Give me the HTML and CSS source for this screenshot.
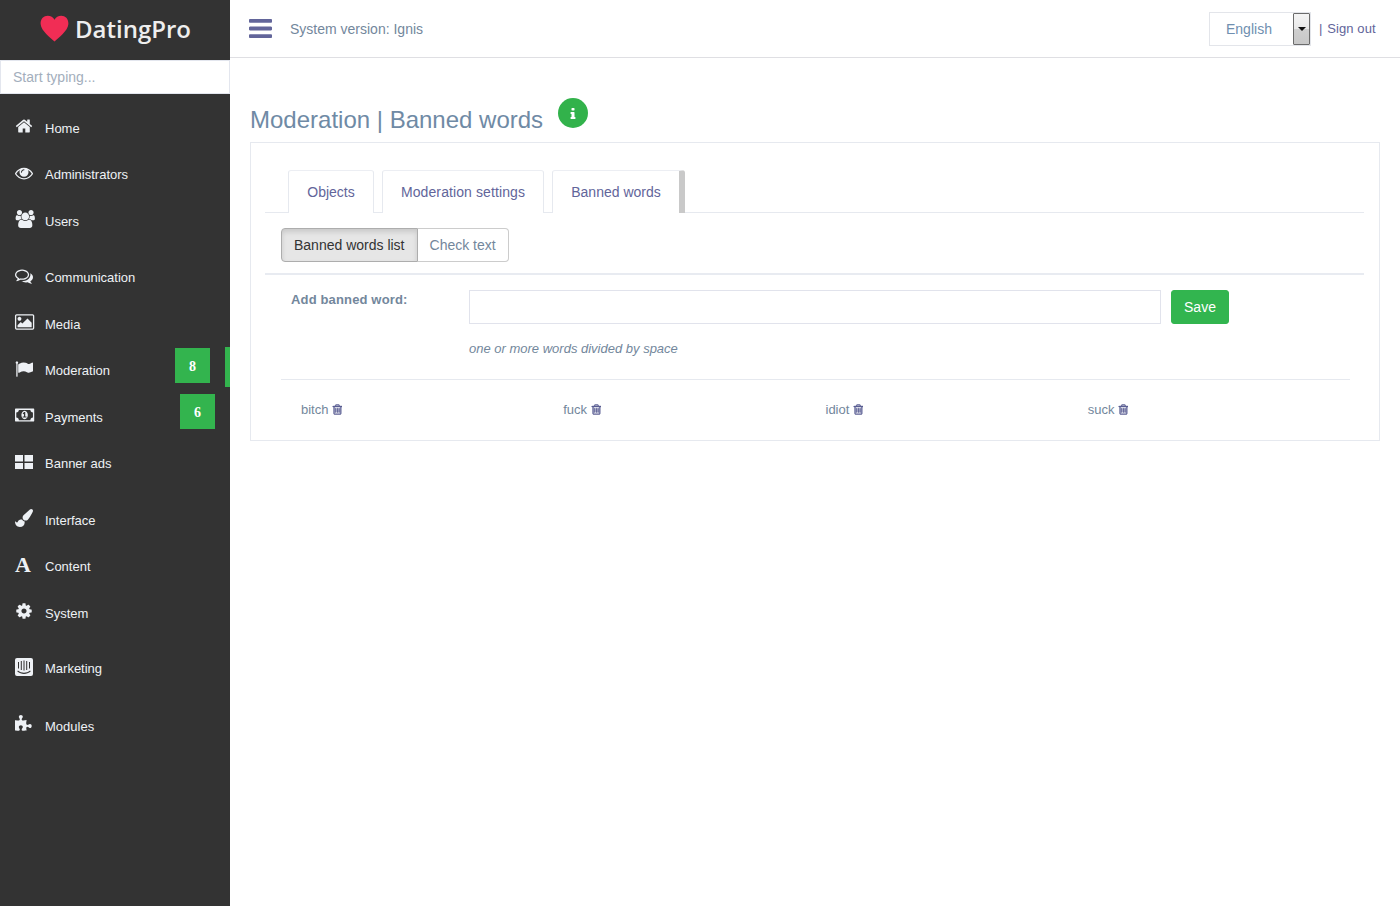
FILE: index.html
```html
<!DOCTYPE html>
<html lang="en">
<head>
<meta charset="utf-8">
<title>Moderation | Banned words</title>
<link rel="stylesheet" href="styles.css">
</head>
<body>
<aside class="sidebar">
  <div class="logo">
    <svg class="heart" viewBox="0 0 30 28"><path d="M15 27.500C11 23.500 1 16.500.6 9.300.3 3.800 4 .8 8 .8c3 0 5.600 1.500 7 4 1.400-2.500 4-4 7-4 4 0 7.700 3 7.400 8.500C29 16.500 19 23.500 15 27.500z"/></svg>
    <span class="logo-text">DatingPro</span>
  </div>
  <input class="search" type="text" placeholder="Start typing...">
  <nav class="menu">
    <a class="item" href="#"><svg class="ico" viewBox="0 0 1792 1792"><path d="M1472 992v480q0 26-19 45t-45 19h-384v-384h-256v384h-384q-26 0-45-19t-19-45v-480q0-1 .5-3t.5-3l575-474 575 474q1 2 1 6zm223-69l-62 74q-8 9-21 11h-3q-13 0-21-7l-692-577-692 577q-12 8-24 7-13-2-21-11l-62-74q-8-10-7-23.500t11-21.500l719-599q32-26 76-26t76 26l244 204v-195q0-14 9-23t23-9h192q14 0 23 9t9 23v408l219 182q10 8 11 21.500t-7 23.500z"/></svg><span>Home</span></a>
    <a class="item" href="#"><svg class="ico" viewBox="0 0 1792 1792"><path d="M1664 960q-152-236-381-353 61 104 61 225 0 185-131.500 316.500t-316.500 131.500-316.500-131.500-131.500-316.500q0-121 61-225-229 117-381 353 133 205 333.500 326.500t434.500 121.500 434.500-121.500 333.500-326.500zm-720-384q0-20-14-34t-34-14q-125 0-214.500 89.500t-89.500 214.500q0 20 14 34t34 14 34-14 14-34q0-86 61-147t147-61q20 0 34-14t14-34zm848 384q0 34-20 69-140 230-376.500 368.500t-499.500 138.500-499.500-139-376.500-368q-20-35-20-69t20-69q140-229 376.500-368t499.500-139 499.500 139 376.500 368q20 35 20 69z"/></svg><span>Administrators</span></a>
    <a class="item" href="#"><svg class="ico ico-w20" viewBox="0 0 1920 1792"><path d="M593 896q-162 5-265 128h-134q-82 0-138-40.500t-56-118.500q0-353 124-353 6 0 43.500 21t97.500 42.500 119 21.500q67 0 133-23-5 37-5 66 0 139 81 256zm1071 637q0 120-73 189.500t-194 69.500h-874q-121 0-194-69.500t-73-189.500q0-53 3.500-103.500t14-109 26.500-108.500 43-97.500 62-81 85.500-53.500 111.500-20q10 0 43 21.500t73 48 107 48 135 21.500 135-21.500 107-48 73-48 43-21.500q61 0 111.500 20t85.500 53.500 62 81 43 97.500 26.500 108.500 14 109 3.500 103.500zm-1024-1277q0 106-75 181t-181 75-181-75-75-181 75-181 181-75 181 75 75 181zm704 384q0 159-112.500 271.500t-271.500 112.500-271.500-112.500-112.500-271.500 112.500-271.500 271.500-112.500 271.500 112.500 112.500 271.500zm576 225q0 78-56 118.500t-138 40.500h-134q-103-123-265-128 81-117 81-256 0-29-5-66 66 23 133 23 59 0 119-21.500t97.500-42.500 43.500-21q124 0 124 353zm-128-609q0 106-75 181t-181 75-181-75-75-181 75-181 181-75 181 75 75 181z"/></svg><span>Users</span></a>
    <a class="item group" href="#"><svg class="ico" viewBox="0 0 1792 1792"><path d="M704 384q-153 0-286 52t-211.500 141-78.500 191q0 82 53 158t149 132l97 56-35 84q34-20 62-39l44-31 53 10q78 14 153 14 153 0 286-52t211.500-141 78.500-191-78.500-191-211.500-141-286-52zm0-128q191 0 353.500 68.500t256.500 186.500 94 257-94 257-256.500 186.500-353.500 68.500q-86 0-176-16-124 88-278 128-36 9-86 16h-3q-11 0-20.500-8t-11.500-21q-1-3-1-6.500t.5-6.500 2-6l2.500-5 3.500-5.500 4-5 4.500-5 4-4.500q5-6 23-25t26-29.500 22.500-29 25-38.500 20.500-44q-124-72-195-177t-71-224q0-139 94-257t256.500-186.500 353.500-68.500zm822 1169q10 24 20.500 44t25 38.500 22.500 29 26 29.500 23 25q1 1 4 4.500t4.500 5 4 5 3.500 5.500l2.500 5 2 6 .5 6.500-1 6.500q-3 14-13 22t-22 7q-50-7-86-16-154-40-278-128-90 16-176 16-271 0-472-132 58 4 88 4 161 0 309-45t264-129q125-92 192-212t67-254q0-77-23-152 129 71 204 178t75 230q0 120-71 224.500t-195 176.500z"/></svg><span>Communication</span></a>
    <a class="item" href="#"><svg class="ico ico-w20" viewBox="0 0 1920 1792"><path d="M576 576q0 80-56 136t-136 56-136-56-56-136 56-136 136-56 136 56 56 136zm1024 384v448h-1408v-192l320-320 160 160 512-512zm96-704h-1600q-13 0-22.500 9.500t-9.500 22.500v1216q0 13 9.500 22.500t22.500 9.500h1600q13 0 22.500-9.500t9.500-22.500v-1216q0-13-9.500-22.500t-22.500-9.500zm160 32v1216q0 66-47 113t-113 47h-1600q-66 0-113-47t-47-113v-1216q0-66 47-113t113-47h1600q66 0 113 47t47 113z"/></svg><span>Media</span></a>
    <a class="item" href="#"><svg class="ico" viewBox="0 0 1792 1792"><path d="M320 256q0 72-64 110v1266q0 13-9.500 22.500t-22.500 9.500h-64q-13 0-22.500-9.500t-9.500-22.500v-1266q-64-38-64-110 0-53 37.500-90.500t90.500-37.500 90.500 37.500 37.500 90.500zm1472 64v763q0 25-12.500 38.500t-39.500 27.500q-215 116-369 116-61 0-123.500-22t-108.500-48-115.500-48-142.500-22q-192 0-464 146-17 9-33 9-26 0-45-19t-19-45v-742q0-32 31-55 21-14 79-43 236-120 421-120 107 0 200 29t219 88q38 19 88 19 54 0 117.500-21t110-47 88-47 54.500-21q26 0 45 19t19 45z"/></svg><span>Moderation</span><b class="badge badge-mod">8</b><i class="sliver"></i></a>
    <a class="item" href="#"><svg class="ico ico-w20" viewBox="0 0 2048 1792"><path d="M768 1152h384v-96h-128v-448h-114l-148 137 77 80q42-37 55-57h2v288h-128v96zm512-256q0 70-21 142t-59.500 134-101.500 101-138 39-138-39-101.500-101-59.500-134-21-142 21-142 59.500-134 101.500-101 138-39 138 39 101.500 101 59.500 134 21 142zm512 256v-512q-106 0-181-75t-75-181h-1152q0 106-75 181t-181 75v512q106 0 181 75t75 181h1152q0-106 75-181t181-75zm128-832v1152q0 26-19 45t-45 19h-1792q-26 0-45-19t-19-45v-1152q0-26 19-45t45-19h1792q26 0 45 19t19 45z"/></svg><span>Payments</span><b class="badge badge-pay">6</b></a>
    <a class="item" href="#"><svg class="ico" viewBox="0 0 18 18"><path d="M0 2h8v6.500H0zM9.500 2H18v6.500H9.500zM0 10h8v6H0zM9.500 10H18v6H9.500z"/></svg><span>Banner ads</span></a>
    <a class="item group" href="#"><svg class="ico" viewBox="0 0 1792 1792"><path d="M1615 0q70 0 122.500 46.500t52.500 116.500q0 63-45 151-332 629-465 752-97 91-218 91-126 0-216.500-92.500t-90.500-219.500q0-128 92-212l638-579q59-54 130-54zm-909 1034q39 76 106.500 130t150.500 76l1 71q4 213-129.500 347t-348.500 134q-123 0-218-46.500t-152.500-127.500-86.500-183-29-220q7 5 41 30t62 44.500 59 36.500 46 17q41 0 55-37 25-66 57.500-112.500t69.500-76 88-47.500 103-25.500 125-10.500z"/></svg><span>Interface</span></a>
    <a class="item" href="#"><span class="ico ico-font">A</span><span>Content</span></a>
    <a class="item" href="#"><svg class="ico" viewBox="0 0 1792 1792"><path d="M1152 896q0-106-75-181t-181-75-181 75-75 181 75 181 181 75 181-75 75-181zm512-109v222q0 12-8 23t-20 13l-185 28q-19 54-39 91 35 50 107 138 10 12 10 25t-9 23q-27 37-99 108t-94 71q-12 0-26-9l-138-108q-44 23-91 38-16 136-29 186-7 28-36 28h-222q-14 0-24.500-8.500t-11.500-21.500l-28-184q-49-16-90-37l-141 107q-10 9-25 9-14 0-25-11-126-114-165-168-7-10-7-23 0-12 8-23 15-21 51-66.500t54-70.500q-27-50-41-99l-183-27q-13-2-21-12.500t-8-23.500v-222q0-12 8-23t19-13l186-28q14-46 39-92-40-57-107-138-10-12-10-24 0-10 9-23 26-36 98.500-107.500t94.500-71.500q13 0 26 10l138 107q44-23 91-38 16-136 29-186 7-28 36-28h222q14 0 24.500 8.500t11.500 21.500l28 184q49 16 90 37l142-107q9-9 24-9 13 0 25 10 129 119 165 170 7 8 7 22 0 12-8 23-15 21-51 66.500t-54 70.500q26 50 41 98l183 28q13 2 21 12.500t8 23.500z"/></svg><span>System</span></a>
    <a class="item marketing" href="#"><svg class="ico" viewBox="0 0 18 18"><path fill-rule="evenodd" d="M2 0h14a2 2 0 0 1 2 2v14a2 2 0 0 1-2 2H2a2 2 0 0 1-2-2V2a2 2 0 0 1 2-2zM3 4v6.500h1V4zm2.800-1v9h1V3zm2.700-.5v10h1v-10zm2.700.5v9h1V3zM14 4v6.500h1V4zM2.900 12.600l-.6.800c4 3.300 9.400 3.300 13.400 0l-.6-.8c-3.700 3-8.500 3-12.200 0z"/></svg><span>Marketing</span></a>
    <a class="item modules" href="#"><svg class="ico" viewBox="0 0 1792 1792"><path d="M1664 1098q0 81-44.500 135t-123.500 54q-41 0-77.500-17.500t-59-38-56.500-38-71-17.500q-110 0-110 124 0 39 16 115t15 115v5q-22 0-33 1-34 3-97.500 11.500t-115.500 13.500-98 5q-61 0-103-26.500t-42-83.500q0-37 17.500-71t38-56.500 38-59 17.500-77.500q0-79-54-123.500t-135-44.500q-84 0-143 45.500t-59 127.500q0 43 15 83t33.500 64.500 33.500 53 15 50.500q0 45-46 89-37 35-117 35-95 0-245-24-9-2-27.500-4t-27.500-4l-13-2q-1 0-3-1-2 0-2-1v-1024q2 1 17.500 3.500t34 5 21.500 3.500q150 24 245 24 80 0 117-35 46-44 46-89 0-22-15-50.500t-33.500-53-33.500-64.500-15-83q0-82 59-127.500t144-45.500q80 0 134 44.500t54 123.500q0 41-17.500 77.500t-38 59-38 56.500-17.500 71q0 57 42 83.500t103 26.500q64 0 180-15t163-17v2q-1 2-3.500 17.500t-5 34-3.500 21.500q-24 150-24 245 0 80 35 117 44 46 89 46 22 0 50.500-15t53-33.500 64.500-33.500 83-15q82 0 127.500 59t45.500 143z"/></svg><span>Modules</span></a>
  </nav>
</aside>
<div class="main">
  <header class="topbar">
    <svg class="burger" viewBox="128 256 1536 1280" preserveAspectRatio="none"><path d="M1664 1344v128q0 26-19 45t-45 19h-1408q-26 0-45-19t-19-45v-128q0-26 19-45t45-19h1408q26 0 45 19t19 45zm0-512v128q0 26-19 45t-45 19h-1408q-26 0-45-19t-19-45v-128q0-26 19-45t45-19h1408q26 0 45 19t19 45zm0-512v128q0 26-19 45t-45 19h-1408q-26 0-45-19t-19-45v-128q0-26 19-45t45-19h1408q26 0 45 19t19 45z"/></svg>
    <span class="version">System version: Ignis</span>
    <div class="lang">
      <span class="lang-value">English</span>
      <span class="lang-arrow"></span>
    </div>
    <a class="signout" href="#"><span class="sep">|</span> Sign out</a>
  </header>
  <main class="content">
    <div class="title-row">
      <h1>Moderation | Banned words</h1>
      <span class="info"><svg viewBox="512 128 768 1408"><path d="M1216 1344v128q0 26-19 45t-45 19h-512q-26 0-45-19t-19-45v-128q0-26 19-45t45-19h64v-384h-64q-26 0-45-19t-19-45v-128q0-26 19-45t45-19h384q26 0 45 19t19 45v576h64q26 0 45 19t19 45zm-128-1152v192q0 26-19 45t-45 19h-256q-26 0-45-19t-19-45v-192q0-26 19-45t45-19h256q26 0 45 19t19 45z"/></svg></span>
    </div>
    <section class="card">
      <ul class="tabs">
        <li class="tab tab-objects"><a href="#">Objects</a></li>
        <li class="tab tab-settings"><a href="#">Moderation settings</a></li>
        <li class="tab tab-active"><a href="#">Banned words</a></li>
      </ul>
      <div class="subnav">
        <a class="sub sub-active" href="#">Banned words list</a><a class="sub" href="#">Check text</a>
      </div>
      <div class="form-row">
        <label class="form-label" for="word">Add banned word:</label>
        <div class="form-field">
          <div class="form-line">
            <input class="word-input" id="word" type="text">
            <button class="save" type="button">Save</button>
          </div>
          <p class="hint">one or more words divided by space</p>
        </div>
      </div>
      <div class="words">
        <div class="word">bitch <svg class="trash" viewBox="128 64 1408 1664"><path d="M704 736v576q0 14-9 23t-23 9h-64q-14 0-23-9t-9-23v-576q0-14 9-23t23-9h64q14 0 23 9t9 23zm256 0v576q0 14-9 23t-23 9h-64q-14 0-23-9t-9-23v-576q0-14 9-23t23-9h64q14 0 23 9t9 23zm256 0v576q0 14-9 23t-23 9h-64q-14 0-23-9t-9-23v-576q0-14 9-23t23-9h64q14 0 23 9t9 23zm128 724v-948h-896v948q0 22 7 40.500t14.500 27 10.500 8.500h832q3 0 10.500-8.500t14.500-27 7-40.500zm-672-1076h448l-48-117q-7-9-17-11h-317q-10 2-17 11zm928 32v64q0 14-9 23t-23 9h-96v948q0 83-47 143.500t-113 60.500h-832q-66 0-113-58.500t-47-141.500v-952h-96q-14 0-23-9t-9-23v-64q0-14 9-23t23-9h309l70-167q15-37 54-63t79-26h320q40 0 79 26t54 63l70 167h309q14 0 23 9t9 23z"/></svg></div>
        <div class="word">fuck <svg class="trash" viewBox="128 64 1408 1664"><path d="M704 736v576q0 14-9 23t-23 9h-64q-14 0-23-9t-9-23v-576q0-14 9-23t23-9h64q14 0 23 9t9 23zm256 0v576q0 14-9 23t-23 9h-64q-14 0-23-9t-9-23v-576q0-14 9-23t23-9h64q14 0 23 9t9 23zm256 0v576q0 14-9 23t-23 9h-64q-14 0-23-9t-9-23v-576q0-14 9-23t23-9h64q14 0 23 9t9 23zm128 724v-948h-896v948q0 22 7 40.500t14.500 27 10.500 8.500h832q3 0 10.500-8.500t14.500-27 7-40.500zm-672-1076h448l-48-117q-7-9-17-11h-317q-10 2-17 11zm928 32v64q0 14-9 23t-23 9h-96v948q0 83-47 143.500t-113 60.500h-832q-66 0-113-58.500t-47-141.500v-952h-96q-14 0-23-9t-9-23v-64q0-14 9-23t23-9h309l70-167q15-37 54-63t79-26h320q40 0 79 26t54 63l70 167h309q14 0 23 9t9 23z"/></svg></div>
        <div class="word">idiot <svg class="trash" viewBox="128 64 1408 1664"><path d="M704 736v576q0 14-9 23t-23 9h-64q-14 0-23-9t-9-23v-576q0-14 9-23t23-9h64q14 0 23 9t9 23zm256 0v576q0 14-9 23t-23 9h-64q-14 0-23-9t-9-23v-576q0-14 9-23t23-9h64q14 0 23 9t9 23zm256 0v576q0 14-9 23t-23 9h-64q-14 0-23-9t-9-23v-576q0-14 9-23t23-9h64q14 0 23 9t9 23zm128 724v-948h-896v948q0 22 7 40.500t14.500 27 10.500 8.500h832q3 0 10.500-8.500t14.500-27 7-40.500zm-672-1076h448l-48-117q-7-9-17-11h-317q-10 2-17 11zm928 32v64q0 14-9 23t-23 9h-96v948q0 83-47 143.500t-113 60.500h-832q-66 0-113-58.500t-47-141.500v-952h-96q-14 0-23-9t-9-23v-64q0-14 9-23t23-9h309l70-167q15-37 54-63t79-26h320q40 0 79 26t54 63l70 167h309q14 0 23 9t9 23z"/></svg></div>
        <div class="word">suck <svg class="trash" viewBox="128 64 1408 1664"><path d="M704 736v576q0 14-9 23t-23 9h-64q-14 0-23-9t-9-23v-576q0-14 9-23t23-9h64q14 0 23 9t9 23zm256 0v576q0 14-9 23t-23 9h-64q-14 0-23-9t-9-23v-576q0-14 9-23t23-9h64q14 0 23 9t9 23zm256 0v576q0 14-9 23t-23 9h-64q-14 0-23-9t-9-23v-576q0-14 9-23t23-9h64q14 0 23 9t9 23zm128 724v-948h-896v948q0 22 7 40.500t14.500 27 10.500 8.500h832q3 0 10.500-8.500t14.500-27 7-40.500zm-672-1076h448l-48-117q-7-9-17-11h-317q-10 2-17 11zm928 32v64q0 14-9 23t-23 9h-96v948q0 83-47 143.500t-113 60.500h-832q-66 0-113-58.500t-47-141.500v-952h-96q-14 0-23-9t-9-23v-64q0-14 9-23t23-9h309l70-167q15-37 54-63t79-26h320q40 0 79 26t54 63l70 167h309q14 0 23 9t9 23z"/></svg></div>
      </div>
    </section>
  </main>
</div>
</body>
</html>
```
FILE: styles.css
```css
* { box-sizing: border-box; }
html, body { height: 100%; }
body {
  margin: 0;
  display: flex;
  overflow: hidden;
  background: #fff;
  font-family: "Liberation Sans", Arial, sans-serif;
  font-size: 14px;
  color: #73879c;
}
a { text-decoration: none; color: inherit; }

.sidebar { width: 230px; flex: none; background: #333; height: 906px; }
.logo { height: 56px; display: flex; align-items: center; padding-left: 40px; margin-bottom: 4px; }
.heart { width: 29px; height: 27px; fill: #f12d55; }
.logo-text { margin-left: 6px; font-family: "Open Sans", sans-serif; font-weight: 600; font-size: 24px; color: #eee; }
.search {
  display: block; width: 230px; height: 34px; padding: 0 12px;
  border: 1px solid #e3e6ee; background: #fff; outline: 0;
  font: 14px "Liberation Sans", Arial, sans-serif;
}
.search::placeholder { color: #a3aebc; opacity: 1; }

.menu { padding-top: 11px; }
.item {
  position: relative; display: grid; grid-template-columns: 30px 1fr; align-items: center;
  height: 46.500px; padding-left: 15px; color: #eef1f5; font-size: 13px;
}
.item.group { margin-top: 10px; }
.item.marketing { margin-top: 9px; }
.item.modules { margin-top: 11px; }
.ico { width: 18px; height: 18px; fill: #eef1f5; position: relative; top: -2px; overflow: visible; }
.ico-w20 { width: 20.500px; }
.ico-font { font: bold 22px/18px "Liberation Serif", serif; color: #eef1f5; }
.badge {
  position: absolute; width: 35px; height: 35px;
  background: #33b44e; color: #fff;
  font: bold 14px/37px "Liberation Serif", serif; text-align: center;
}
.badge-mod { left: 175px; top: .5px; }
.badge-pay { left: 180px; top: 0; }
.sliver { position: absolute; left: 225px; top: -.5px; width: 5px; height: 40px; background: #33b44e; }

.main { flex: 1; min-width: 0; }
.topbar {
  height: 58px; display: flex; align-items: center;
  border-bottom: 1px solid #dfdfe3; padding: 0 25px 0 19px;
}
.burger { width: 23px; height: 19px; fill: #62659a; margin-right: 18px; }
.version { color: #73879c; }
.lang {
  position: relative; margin-left: auto; width: 102px; height: 34px;
  border: 1px solid #e3e5ea; padding-left: 16px; line-height: 32px; font-size: 14px; color: #6f8fb0;
}
.lang-arrow {
  position: absolute; right: 0; top: 0; width: 17px; height: 32px;
  border: 1px solid #6b6b6b; border-radius: 1px;
  background: linear-gradient(#f4f4f4 0, #e8e8e8 50%, #cfcfcf 50%, #c8c8c8 100%);
}
.lang-arrow::after {
  content: ""; position: absolute; left: 4px; top: 13px;
  border: 4px solid transparent; border-top-color: #111; border-bottom: 0;
}
.signout { margin-left: 8px; width: 56px; flex: none; white-space: nowrap; font-size: 13px; letter-spacing: .1px; color: #62659a; }
.sep { color: #62659a; margin-right: 1px; }

.content { padding: 40px 20px 0; }
.title-row { display: flex; align-items: flex-start; height: 44px; }
h1 { margin: 8px 0 0; font-size: 24px; font-weight: 400; line-height: 28px; color: #6f8aa5; }
.info {
  margin-left: 15px; width: 30px; height: 30px; border-radius: 50%;
  background: #32b24b; display: flex; align-items: center; justify-content: center;
}
.info svg { width: 6px; height: 11px; fill: #fff; }

.card { width: 1130px; height: 299px; border: 1px solid #e6e9ef; padding: 27px 15px 0 14px; }
.tabs {
  list-style: none; margin: 0; padding: 0 0 0 23px; height: 43px;
  display: flex; border-bottom: 1px solid #e6e9ef;
}
.tab {
  height: 43px; border: 1px solid #e6e9ef; border-bottom: 0; border-top-color: #eceef3;
  border-radius: 3px 3px 0 0; background: #fff; text-align: center; line-height: 43px; color: #62659a;
}
.tab-objects { width: 86px; color: #62659a; }
.tab-settings { width: 162px; margin-left: 8px; letter-spacing: .1px; }
.tab-active { width: 133px; margin-left: 8px; border-right: 6px solid #c9c9c9; }
.subnav { display: flex; margin: 15px 0 0 16px; height: 34px; }
.sub {
  height: 34px; padding: 0 12px; border: 1px solid #ccc; border-left: 0; border-radius: 0 4px 4px 0;
  line-height: 32px; color: #73879c; font-size: 14px; background: #fff;
}
.sub-active {
  border: 1px solid #adadad; border-radius: 4px 0 0 4px; background: #e6e6e6; color: #333;
  box-shadow: inset 0 3px 5px rgba(0,0,0,.125);
}
.form-row { display: flex; margin-top: 11px; padding-top: 15px; border-top: 2px solid #e8ebf1; height: 106px; }
.form-label { width: 204px; padding: 2px 0 0 26px; font-weight: 700; font-size: 13px; line-height: 15px; letter-spacing: .15px; color: #73879c; }
.form-line { display: flex; }
.word-input { width: 692px; height: 34px; border: 1px solid #e1e3ec; outline: 0; background: #fff; }
.save {
  width: 58px; height: 34px; margin-left: 10px; padding: 0; border: 1px solid #32b54f; border-radius: 3px;
  background: #32b54f; color: #fff; font: 14px "Liberation Sans", Arial, sans-serif;
}
.hint { margin: 17px 0 0; font-size: 13px; font-style: italic; line-height: 15px; color: #73879c; }
.words {
  display: grid; grid-template-columns: repeat(4, 1fr);
  margin: 0 14px 0 16px; padding: 0 20px 0 0; border-top: 1px solid #e6e9ef;
}
.word { display: flex; align-items: center; gap: 4px; padding: 22px 0 0 20px; font-size: 13px; line-height: 15px; color: #73879c; }
.trash { width: 10px; height: 11px; fill: #5c5f94; stroke: #5c5f94; stroke-width: 70; }
```
